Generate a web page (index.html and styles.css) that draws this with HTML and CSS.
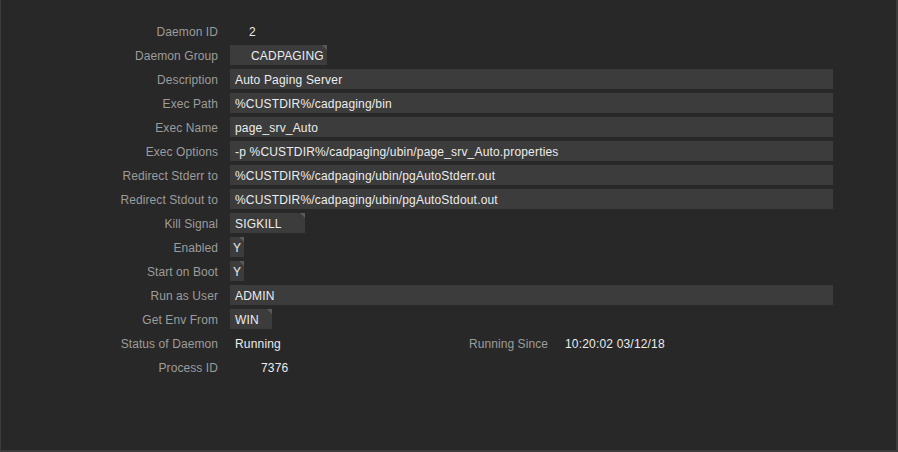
FILE: index.html
```html
<!DOCTYPE html>
<html>
<head>
<meta charset="utf-8">
<link rel="stylesheet" href="styles.css">
</head>
<body>
<div class="frame">
  <div class="form">
    <div class="row"><div class="label">Daemon ID</div><div class="plain id">2</div></div>
    <div class="row"><div class="label">Daemon Group</div><div class="box combo group">CADPAGING</div></div>
    <div class="row"><div class="label">Description</div><div class="box wide">Auto Paging Server</div></div>
    <div class="row"><div class="label">Exec Path</div><div class="box wide">%CUSTDIR%/cadpaging/bin</div></div>
    <div class="row"><div class="label">Exec Name</div><div class="box wide">page_srv_Auto</div></div>
    <div class="row"><div class="label">Exec Options</div><div class="box wide">-p %CUSTDIR%/cadpaging/ubin/page_srv_Auto.properties</div></div>
    <div class="row"><div class="label">Redirect Stderr to</div><div class="box wide">%CUSTDIR%/cadpaging/ubin/pgAutoStderr.out</div></div>
    <div class="row"><div class="label">Redirect Stdout to</div><div class="box wide">%CUSTDIR%/cadpaging/ubin/pgAutoStdout.out</div></div>
    <div class="row"><div class="label">Kill Signal</div><div class="box combo kill">SIGKILL</div></div>
    <div class="row"><div class="label">Enabled</div><div class="box combo yn">Y</div></div>
    <div class="row"><div class="label">Start on Boot</div><div class="box combo yn">Y</div></div>
    <div class="row"><div class="label">Run as User</div><div class="box wide">ADMIN</div></div>
    <div class="row"><div class="label">Get Env From</div><div class="box combo env">WIN</div></div>
    <div class="row"><div class="label">Status of Daemon</div><div class="plain status">Running</div><div class="label since">Running Since</div><div class="plain sinceval">10:20:02 03/12/18</div></div>
    <div class="row"><div class="label">Process ID</div><div class="plain pid">7376</div></div>
  </div>
</div>
</body>
</html>
```
FILE: styles.css
```css
html, body {
  margin: 0;
  padding: 0;
  background: #282828;
}
.frame {
  width: 898px;
  height: 452px;
  box-sizing: border-box;
  background: #282828;
  border-left: 1px solid #3c3c3c;
  border-right: 2px solid #3c3c3c;
  border-bottom: 2px solid #3c3c3c;
  font-family: "Liberation Sans", Arial, sans-serif;
  font-size: 12px;
  letter-spacing: 0.18px;
}
.form {
  padding-top: 21px;
  display: flex;
  flex-direction: column;
  gap: 4px;
}
.row {
  display: flex;
  height: 20px;
  align-items: flex-start;
}
.label {
  width: 217px;
  text-align: right;
  color: #9c9c9c;
  margin-right: 12px;
  height: 20px;
  line-height: 22px;
  white-space: nowrap;
  letter-spacing: 0.08px;
}
.box {
  height: 20px;
  line-height: 22px;
  background: #3c3c3c;
  color: #ececec;
  padding-left: 5px;
  box-sizing: border-box;
  white-space: nowrap;
}
.wide { width: 603px; }
.combo { position: relative; }
.combo::after {
  content: "";
  position: absolute;
  top: 0;
  right: 0;
  width: 0;
  height: 0;
  border-top: 5px solid #5a5a5a;
  border-left: 5px solid transparent;
}
.group { width: 97px; padding-left: 21px; }
.kill { width: 75px; }
.yn { width: 14px; padding-left: 3px; }
.env { width: 42px; }
.plain {
  color: #ececec;
  height: 20px;
  line-height: 22px;
  white-space: nowrap;
}
.id { padding-left: 19px; }
.status { padding-left: 5px; width: 215px; }
.since { width: 98px; margin-right: 17px; }
.pid { padding-left: 31px; }
```
